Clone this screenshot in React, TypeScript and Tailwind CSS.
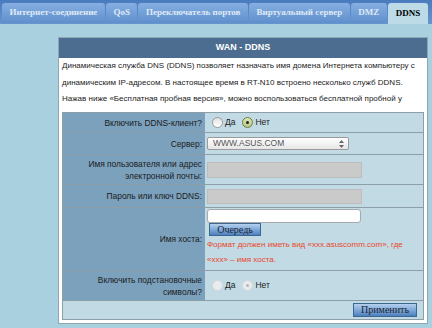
import React from "react";

const tabs = [
  { name: "Интернет-соединение", active: false },
  { name: "QoS", active: false },
  { name: "Переключатель портов", active: false },
  { name: "Виртуальный сервер", active: false },
  { name: "DMZ", active: false },
  { name: "DDNS", active: true },
];

function Radio({ checked, disabled }: { checked?: boolean; disabled?: boolean }) {
  if (disabled) {
    return (
      <span className="inline-flex items-center justify-center w-[11px] h-[11px] rounded-full border border-[#d4d8da] bg-[#e9ecee]">
        {checked && <span className="w-[3px] h-[3px] rounded-full bg-[#b5b8ba]" />}
      </span>
    );
  }
  return checked ? (
    <span className="inline-flex items-center justify-center w-[11px] h-[11px] rounded-full border border-[#6d7f3e] bg-gradient-to-b from-[#dbe6b4] to-[#b7c98a]">
      <span className="w-[3px] h-[3px] rounded-full bg-[#222]" />
    </span>
  ) : (
    <span className="inline-block w-[11px] h-[11px] rounded-full border border-[#9a9a9a] bg-gradient-to-b from-[#e2e2e2] to-white" />
  );
}

function YesNo({ disabled }: { disabled?: boolean }) {
  return (
    <div className="flex items-center pl-[5px] text-[8.5px] text-[#1a1a1a]">
      <Radio disabled={disabled} />
      <span className="ml-[2px] mr-[7px]">Да</span>
      <Radio checked disabled={disabled} />
      <span className="ml-[2px]">Нет</span>
    </div>
  );
}

function Row({
  label,
  h,
  children,
}: {
  label: React.ReactNode;
  h: string;
  children?: React.ReactNode;
}) {
  return (
    <div className={`flex ${h} border-b border-[#8e9ea9]`}>
      <div className="w-[142px] shrink-0 bg-[#7ba1bd] flex items-center justify-end pr-[3px] text-right text-[8.4px] leading-[12px] text-[#1b1b1b]">
        {label}
      </div>
      <div className="flex-1 bg-[#c2dae4] flex flex-col justify-center pl-[2px]">{children}</div>
    </div>
  );
}

function BlueButton({ children, className }: { children: React.ReactNode; className?: string }) {
  return (
    <button
      className={`flex items-center justify-center border border-[#3d6690] bg-gradient-to-b from-[#b5d0ee] via-[#7ea8d8] to-[#4f80bd] font-['Liberation_Serif',serif] text-[10px] text-[#1c2633] leading-none ${className ?? ""}`}
    >
      {children}
    </button>
  );
}

export default function App() {
  return (
    <div className="w-[432px] h-[328px] overflow-hidden bg-[#a9d0de] font-['Liberation_Sans',Arial,sans-serif]">
      {/* tabs */}
      <div className="h-[24px] bg-gradient-to-b from-[#4a7bbd] to-[#6795ce] flex items-end pl-[2px] gap-[1px] whitespace-nowrap">
        {tabs.map((t) =>
          t.active ? (
            <div
              key={t.name}
              className="h-[21px] px-[8px] flex items-center rounded-t-[3px] bg-[#bcdbe7] font-['Liberation_Serif',serif] font-bold text-[9px] text-black"
            >
              {t.name}
            </div>
          ) : (
            <div
              key={t.name}
              className="h-[20px] mb-[1px] px-[7.5px] flex items-center rounded-t-[3px] bg-gradient-to-b from-[#86afe2] to-[#5f8fcc] font-['Liberation_Serif',serif] font-bold text-[9px] text-[#dfe9f6]"
            >
              {t.name}
            </div>
          )
        )}
      </div>

      <div className="pl-[58px] pt-[13px]">
        <div className="w-[370px] border border-[#8fa6b4] bg-white">
          <div className="h-[20px] bg-[#4d6d90] flex items-center justify-center text-white font-bold text-[9px]">
            WAN - DDNS
          </div>
          <div className="h-[54px] px-[3px] text-[8px] leading-[16.5px] text-[#222] overflow-hidden whitespace-nowrap">
            <div>Динамическая служба DNS (DDNS) позволяет назначать имя домена Интернета компьютеру с</div>
            <div>динамическим IP-адресом. В настоящее время в RT-N10 встроено несколько служб DDNS.</div>
            <div>Нажав ниже «Бесплатная пробная версия», можно воспользоваться бесплатной пробной у</div>
          </div>

          <div className="mx-[3px] mb-[3px] border border-[#8e9ea9]">
            <Row label="Включить DDNS-клиент?" h="h-[20px]">
              <YesNo />
            </Row>
            <Row label="Сервер:" h="h-[22px]">
              <div className="w-[142px] h-[13px] rounded-[2px] border border-[#9a9a9a] bg-gradient-to-b from-white to-[#e6e6e6] flex items-center justify-between pl-[5px] pr-[4px]">
                <span className="text-[8.5px] text-[#555] leading-none">WWW.ASUS.COM</span>
                <svg width="5" height="8" viewBox="0 0 5 8">
                  <path d="M2.5 0L5 3H0z" fill="#666" />
                  <path d="M2.5 8L5 5H0z" fill="#666" />
                </svg>
              </div>
            </Row>
            <Row
              label={
                <span>
                  Имя пользователя или адрес
                  <br />
                  электронной почты:
                </span>
              }
              h="h-[30px]"
            >
              <div className="w-[155px] h-[16px] border border-[#bdbdbd] bg-[#cacaca]" />
            </Row>
            <Row label="Пароль или ключ DDNS:" h="h-[23px]">
              <div className="w-[155px] h-[15px] border border-[#bdbdbd] bg-[#cacaca]" />
            </Row>
            <Row label="Имя хоста:" h="h-[63px]">
              <div className="flex flex-col items-start justify-start h-full pt-[1px]">
                <div className="w-[154px] h-[14px] rounded-[3px] border border-[#a8a8a8] bg-white" />
                <BlueButton className="ml-[2px] w-[52px] h-[13px]">Очередь</BlueButton>
                <div className="text-[8px] leading-[15px] text-[#e8482c] mt-[1px]">
                  Формат должен иметь вид «xxx.asuscomm.com», где
                  <br />
                  «xxx» – имя хоста.
                </div>
              </div>
            </Row>
            <Row
              label={
                <span>
                  Включить подстановочные
                  <br />
                  символы?
                </span>
              }
              h="h-[30px]"
            >
              <YesNo disabled />
            </Row>
            <div className="h-[18px] bg-[#c2dae4] flex items-center justify-end pr-[6px]">
              <BlueButton className="w-[64px] h-[14px]">Применить</BlueButton>
            </div>
          </div>
        </div>
      </div>
    </div>
  );
}
